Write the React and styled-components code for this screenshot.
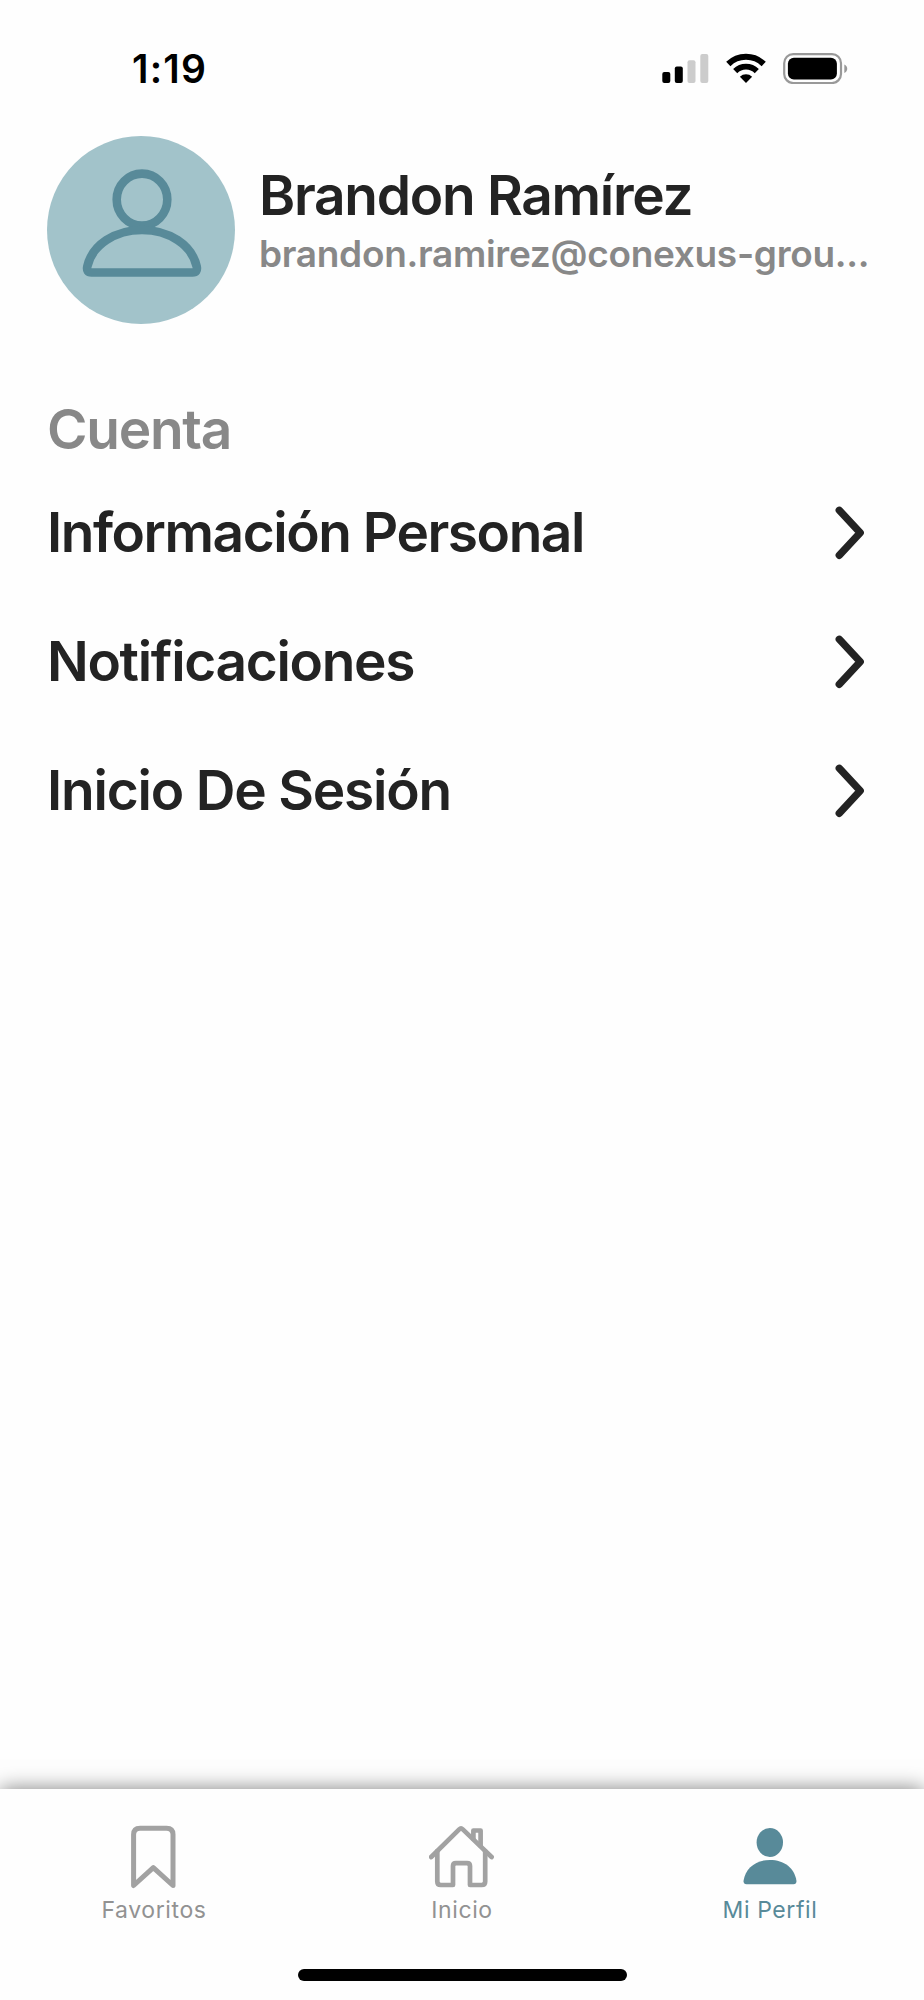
import styled, { createGlobalStyle } from "styled-components";

const GlobalStyle = createGlobalStyle`
  * {
    box-sizing: border-box;
  }

  body {
    background: #fefefe;
    color: #232323;
    font-family: Inter, "Liberation Sans", sans-serif;
    margin: 0;
  }

  h1, h2, p, ul {
    margin: 0;
    padding: 0;
  }

  svg {
    display: block;
    flex: none;
  }
`;

const Screen = styled.div`
  display: flex;
  flex-direction: column;
  height: 2000px;
  overflow: hidden;
  width: 924px;
`;

const StatusBar = styled.header`
  align-items: flex-start;
  color: #000;
  display: flex;
  height: 136px;
  justify-content: space-between;
  padding: 45px 76px 0 132px;

  .time {
    font-size: 39px;
    font-weight: 600;
    letter-spacing: 1.2px;
    line-height: 48px;
  }

  .indicators {
    display: flex;
    gap: 17px;
    padding-top: 8px;
  }
`;

const Profile = styled.section`
  display: flex;
  gap: 24px;
  padding: 0 47px;

  .info {
    min-width: 0;
    padding-top: 29px;
  }
`;

const Avatar = styled.div`
  background: #a2c3ca;
  border-radius: 50%;
  color: #588a99;
  flex: none;
  height: 188px;
  width: 188px;
`;

const Name = styled.h1`
  font-size: 55px;
  font-weight: 600;
  letter-spacing: -1.27px;
  line-height: 60px;
  white-space: nowrap;
`;

const Email = styled.p`
  color: #888;
  font-size: 37px;
  font-weight: 580;
  letter-spacing: -0.3px;
  line-height: 46px;
  padding-top: 6px;
  white-space: nowrap;
`;

const Account = styled.section`
  padding: 75px 47px 0;
`;

const SectionTitle = styled.h2`
  color: #888;
  font-size: 55px;
  font-weight: 600;
  letter-spacing: -1.25px;
  line-height: 60px;
  padding-bottom: 8px;
`;

const Option = styled.li`
  align-items: center;
  display: flex;
  font-size: 55px;
  font-weight: 600;
  height: 129px;
  justify-content: space-between;
  letter-spacing: ${({ $spacing }) => $spacing}px;
  line-height: 60px;
  list-style: none;
`;

const TabBar = styled.nav`
  background: #fefefe;
  box-shadow: 0 0 20px rgba(0, 0, 0, 0.5);
  display: grid;
  grid-template-columns: repeat(3, 1fr);
  grid-template-rows: 180px 12px;
  height: 211px;
  justify-items: center;
  margin-top: auto;
`;

const Tab = styled.div`
  align-items: center;
  color: ${({ $active }) => ($active ? "#588a99" : "#a2a2a2")};
  display: flex;
  flex-direction: column;
  gap: 6px;
  padding-top: 35px;

  span {
    color: ${({ $active }) => ($active ? "#588a99" : "#929292")};
    font-size: 23px;
    font-weight: 430;
    letter-spacing: 0.6px;
    line-height: 28px;
  }
`;

const HomeIndicator = styled.div`
  background: #000;
  border-radius: 6px;
  grid-column: 1 / -1;
  height: 12px;
  width: 329px;
`;

const SignalIcon = () => (
  <svg width="47" height="31" viewBox="0 0 47 31">
    <rect x="0.3" y="19" width="8" height="11" rx="2" />
    <rect x="12.8" y="13.5" width="8" height="16.5" rx="2" />
    <rect x="25.5" y="7.3" width="8" height="22.7" rx="2" fill="#ccc" />
    <rect x="38.3" y="1" width="8" height="29" rx="2" fill="#ccc" />
  </svg>
);

const WifiIcon = () => (
  <svg width="40" height="31" viewBox="0 0 40 31">
    <g fill="none" stroke="currentColor">
      <path d="M2.3 11A25.2 25.2 0 0 1 37.7 11" strokeWidth="6" />
      <path d="M9.2 18.1A15.3 15.3 0 0 1 30.8 18.1" strokeWidth="5.8" />
    </g>
    <path d="M20 30L13.9 23.8A8.8 8.8 0 0 1 26.1 23.8Z" />
  </svg>
);

const BatteryIcon = () => (
  <svg width="65" height="31" viewBox="0 0 65 31">
    <rect x="1.2" y="1.2" width="56.8" height="28.8" rx="9" fill="none" stroke="#999" strokeWidth="2.2" />
    <rect x="4.9" y="4.8" width="49" height="21.6" rx="6" />
    <path d="M61.3 11.5C65.2 13 65.2 18.5 61.3 20Z" fill="#999" />
  </svg>
);

const AvatarIcon = () => (
  <svg width="188" height="188" viewBox="0 0 188 188" fill="none" stroke="currentColor" strokeWidth="8.6">
    <ellipse cx="95" cy="63.6" rx="25.3" ry="26" />
    <path d="M44.5 136.5H145.5Q151 136.5 149.7 130.5C145 109 122 94 95 94C68 94 45 109 40.3 130.5Q39 136.5 44.5 136.5Z" />
  </svg>
);

const ChevronIcon = () => (
  <svg
    width="48"
    height="60"
    viewBox="0 0 48 60"
    fill="none"
    stroke="currentColor"
    strokeWidth="7.4"
    strokeLinecap="round"
    strokeLinejoin="round"
  >
    <path d="M10.3 8.3L31.2 30.8L10.3 53.3" />
  </svg>
);

const BookmarkIcon = () => (
  <svg width="66" height="66" viewBox="0 0 66 66" fill="none" stroke="currentColor" strokeWidth="5" strokeLinejoin="round">
    <path d="M12.6 61.5V10.5Q12.6 4.2 19.1 4.2H45.5Q52 4.2 52 10.5V61.5L32.3 43.6Z" />
  </svg>
);

const HomeIcon = () => (
  <svg
    width="66"
    height="66"
    viewBox="0 0 66 66"
    fill="none"
    stroke="currentColor"
    strokeWidth="4.7"
    strokeLinecap="round"
    strokeLinejoin="round"
  >
    <path d="M2.2 33L30.2 5.4Q32 3.7 33.8 5.4L62.6 33" />
    <path d="M8.3 27V57.5Q8.3 61 11.8 61H24V42Q24 39.2 27 39.2H38Q41 39.2 41 42V61H52.7Q56.2 61 56.2 57.5V27" />
    <path d="M44.4 15V6.5H51.6V22" />
  </svg>
);

const PersonIcon = () => (
  <svg width="66" height="66" viewBox="0 0 66 66" fill="currentColor">
    <ellipse cx="32.8" cy="18.5" rx="13.2" ry="14.4" />
    <path d="M9.5 60.3Q6.2 60.3 6.6 56.5C8.5 44 19 35.9 33 35.9C47 35.9 57.5 44 59.4 56.5Q59.8 60.3 56.5 60.3Z" />
  </svg>
);

const options = [
  { label: "Información Personal", spacing: -1.46 },
  { label: "Notificaciones", spacing: -1.32 },
  { label: "Inicio De Sesión", spacing: -1.2 },
];

const tabs = [
  { label: "Favoritos", icon: BookmarkIcon },
  { label: "Inicio", icon: HomeIcon },
  { label: "Mi Perfil", icon: PersonIcon, active: true },
];

const App = () => {
  return (
    <Screen>
      <GlobalStyle />

      <StatusBar>
        <span className="time">1:19</span>
        <div className="indicators">
          <SignalIcon />
          <WifiIcon />
          <BatteryIcon />
        </div>
      </StatusBar>

      <Profile>
        <Avatar>
          <AvatarIcon />
        </Avatar>
        <div className="info">
          <Name>Brandon Ramírez</Name>
          <Email>brandon.ramirez@conexus-grou...</Email>
        </div>
      </Profile>

      <Account>
        <SectionTitle>Cuenta</SectionTitle>
        <ul>
          {options.map(({ label, spacing }) => (
            <Option key={label} $spacing={spacing}>
              {label}
              <ChevronIcon />
            </Option>
          ))}
        </ul>
      </Account>

      <TabBar>
        {tabs.map(({ label, icon: Icon, active }) => (
          <Tab key={label} $active={active}>
            <Icon />
            <span>{label}</span>
          </Tab>
        ))}
        <HomeIndicator />
      </TabBar>
    </Screen>
  );
};

export default App;
